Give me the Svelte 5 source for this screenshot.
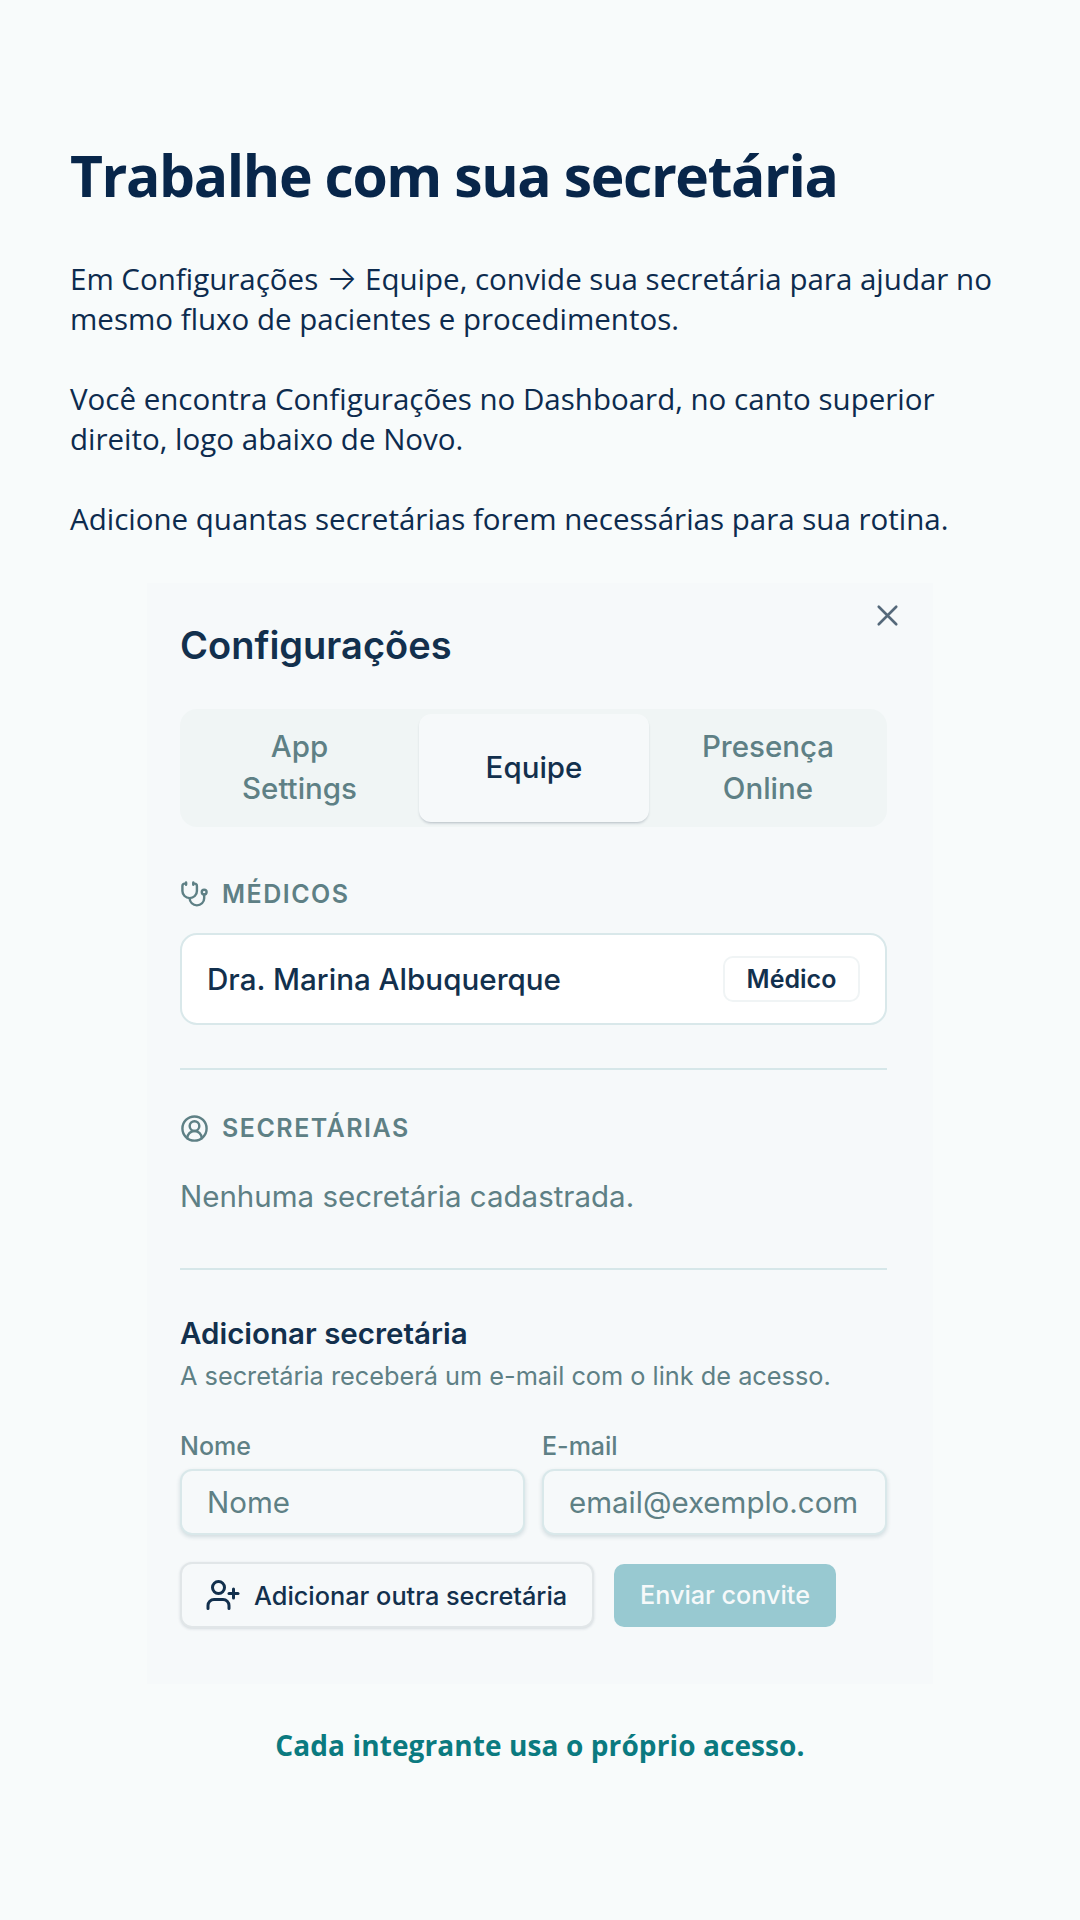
<script>
  const paragraphs = [
    ['Você encontra Configurações no Dashboard, no canto superior', 'direito, logo abaixo de Novo.'],
    ['Adicione quantas secretárias forem necessárias para sua rotina.']
  ];
</script>

<main class="page">
  <h1>Trabalhe com sua secretária</h1>
  <div class="intro">
    <p>
      <span>Em Configurações <b class="arrow">→</b> Equipe, convide sua secretária para ajudar no</span>
      <span>mesmo fluxo de pacientes e procedimentos.</span>
    </p>
    {#each paragraphs as lines}
      <p>{#each lines as l}<span>{l}</span>{/each}</p>
    {/each}
  </div>

  <section class="modal">
    <button class="close" aria-label="Fechar">
      <svg viewBox="0 0 24 24" width="35" height="35" fill="none" stroke="currentColor" stroke-width="1.8" stroke-linecap="round"><path d="M18 6 6 18M6 6l12 12"/></svg>
    </button>
    <h2>Configurações</h2>
    <div class="tabs">
      <div class="tab">App<br />Settings</div>
      <div class="tab active">Equipe</div>
      <div class="tab">Presença<br />Online</div>
    </div>

    <div class="label first">
      <svg viewBox="0 0 24 24" width="29" height="29" fill="none" stroke="currentColor" stroke-width="2" stroke-linecap="round" stroke-linejoin="round"><path d="M11 2v2"/><path d="M5 2v2"/><path d="M5 3H4a2 2 0 0 0-2 2v4a6 6 0 0 0 12 0V5a2 2 0 0 0-2-2h-1"/><path d="M8 15a6 6 0 0 0 12 0v-3"/><circle cx="20" cy="10" r="2"/></svg>
      <span>MÉDICOS</span>
    </div>
    <div class="card">
      <span>Dra. Marina Albuquerque</span>
      <span class="badge">Médico</span>
    </div>
    <hr class="div1" />

    <div class="label">
      <svg viewBox="0 0 24 24" width="29" height="29" fill="none" stroke="currentColor" stroke-width="2" stroke-linecap="round" stroke-linejoin="round"><path d="M18 20a6 6 0 0 0-12 0"/><circle cx="12" cy="10" r="4"/><circle cx="12" cy="12" r="10"/></svg>
      <span>SECRETÁRIAS</span>
    </div>
    <p class="empty">Nenhuma secretária cadastrada.</p>
    <hr class="div2" />

    <h3>Adicionar secretária</h3>
    <p class="hint">A secretária receberá um e-mail com o link de acesso.</p>

    <div class="fields">
      <label><span>Nome</span><input placeholder="Nome" /></label>
      <label><span>E-mail</span><input placeholder="email@exemplo.com" /></label>
    </div>

    <div class="actions">
      <button class="outline">
        <svg viewBox="0 0 24 24" width="36" height="36" fill="none" stroke="currentColor" stroke-width="2" stroke-linecap="round" stroke-linejoin="round"><path d="M16 21v-2a4 4 0 0 0-4-4H6a4 4 0 0 0-4 4v2"/><circle cx="9" cy="7" r="4"/><path d="M19 8v6"/><path d="M22 11h-6"/></svg>
        Adicionar outra secretária
      </button>
      <button class="primary">Enviar convite</button>
    </div>
  </section>

  <p class="caption">Cada integrante usa o próprio acesso.</p>
</main>

<style>
  :global(body) { margin: 0; background: #f8fbfb; }
  * { box-sizing: border-box; }
  .page {
    width: 1080px;
    height: 1920px;
    padding: 137px 0 0 70px;
    font-family: "Open Sans", "Noto Sans", sans-serif;
    color: #0d2b4e;
    background: #f8fbfb;
    overflow: hidden;
  }
  h1 { margin: 0; font-size: 57px; line-height: 76px; font-weight: 700; letter-spacing: -1.4px; color: #08264a; }
  .intro { margin-top: 46px; display: flex; flex-direction: column; gap: 40px; }
  .intro p { margin: 0; font-size: 29.5px; line-height: 40px; }
  .intro span { display: block; white-space: nowrap; }
  .arrow { font-family: "Inter", sans-serif; font-weight: 300; font-size: 33px; line-height: 20px; }

  .modal {
    position: relative;
    width: 786px;
    height: 1101px;
    margin: 44px 0 0 77px;
    padding: 39px 46px 0 33px;
    background: #f6f9fa;
    font-family: "Inter", sans-serif;
    color: #12304d;
  }
  .close {
    position: absolute;
    top: 15px;
    right: 28px;
    padding: 0;
    border: 0;
    background: none;
    color: #55697a;
    display: flex;
  }
  h2 { margin: 0; font-size: 38px; line-height: 46px; font-weight: 600; }
  .tabs {
    margin-top: 41px;
    height: 118px;
    width: 707px;
    padding: 5px 0;
    display: grid;
    grid-template-columns: 239px 230px 238px;
    background: #f0f5f5;
    border-radius: 17px;
  }
  .tab {
    display: flex;
    align-items: center;
    justify-content: center;
    padding-bottom: 3px;
    text-align: center;
    font-size: 29.5px;
    line-height: 42px;
    font-weight: 500;
    color: #5e8085;
  }
  .tab.active {
    background: #f6f9fa;
    border-radius: 12px;
    color: #12304d;
    box-shadow: 0 2px 3px -1px rgba(20, 41, 63, 0.28);
  }
  .label {
    display: flex;
    align-items: center;
    gap: 13px;
    font-size: 25px;
    line-height: 30px;
    font-weight: 600;
    letter-spacing: 1.5px;
    color: #5e8085;
  }
  .label.first { margin-top: 52px; }
  .card {
    width: 707px;
    height: 92px;
    margin-top: 24px;
    padding: 0 25px;
    display: flex;
    align-items: center;
    justify-content: space-between;
    background: #fff;
    border: 2px solid #d9e8ea;
    border-radius: 17px;
    font-size: 29.6px;
    font-weight: 500;
  }
  .badge {
    width: 137px;
    height: 46px;
    display: flex;
    align-items: center;
    justify-content: center;
    border: 2px solid #f0f4f5;
    border-radius: 10px;
    font-size: 25px;
    font-weight: 600;
  }
  hr { width: 707px; height: 2px; border: 0; margin: 0; background: #d6e7e9; }
  .div1 { margin: 43px 0 43px; }
  .empty { margin: 35px 0 0; font-size: 29.5px; line-height: 36px; color: #5e8085; }
  .div2 { margin-top: 54px; }
  h3 { margin: 46px 0 0; font-size: 29.5px; line-height: 34px; font-weight: 600; }
  .hint { margin: 11px 0 0; font-size: 25.3px; line-height: 30px; color: #5e8085; }
  .fields { display: grid; grid-template-columns: 345px 345px; gap: 17px; width: 707px; margin-top: 40px; }
  .fields label { display: flex; flex-direction: column; font-size: 25px; line-height: 30px; font-weight: 500; color: #5e8085; }
  .fields span { height: 38px; }
  input {
    width: 100%;
    height: 66px;
    padding: 0 25px;
    border: 2px solid #d9e8ea;
    border-radius: 12px;
    background: #f6f9fa;
    font: 400 29.5px "Inter", sans-serif;
    box-shadow: 0 2px 4px rgba(20, 70, 90, 0.16);
  }
  input::placeholder { color: #5e8085; opacity: 1; }
  .actions { display: flex; align-items: center; gap: 20px; margin-top: 27px; }
  button { font-family: inherit; }
  .outline {
    width: 414px;
    height: 66px;
    padding: 0 0 0 23px;
    display: flex;
    align-items: center;
    gap: 13px;
    white-space: nowrap;
    background: #f6f9fa;
    border: 2px solid #e1e6e8;
    border-radius: 12px;
    box-shadow: 0 1px 3px rgba(20, 41, 63, 0.14);
    color: #12304d;
    font-size: 25.3px;
    font-weight: 500;
  }
  .primary {
    width: 222px;
    height: 63px;
    border: 0;
    border-radius: 10px;
    background: #98c9d1;
    color: #f6f9fa;
    font-size: 25.2px;
    font-weight: 500;
  }
  .caption {
    margin: 42px 0 0;
    width: 940px;
    text-align: center;
    font-size: 28px;
    line-height: 38px;
    font-weight: 700;
    letter-spacing: 0.1px;
    color: #0b7a80;
  }
</style>
